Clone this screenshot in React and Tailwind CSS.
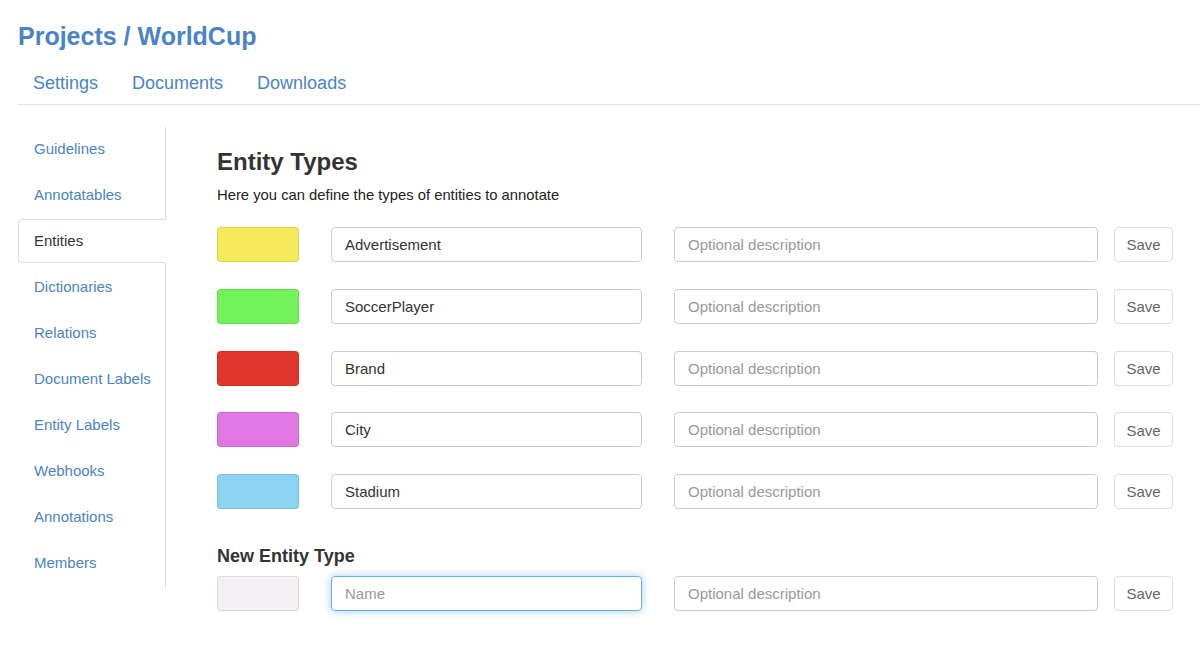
const linkColor = "text-[#4a84c4]";

const entities = [
  { name: "Advertisement", color: "bg-[#f4ea5a]" },
  { name: "SoccerPlayer", color: "bg-[#72f25a]" },
  { name: "Brand", color: "bg-[#e0362b]" },
  { name: "City", color: "bg-[#e177e3]" },
  { name: "Stadium", color: "bg-[#8dd3f3]" },
];

const sideItems = [
  "Guidelines",
  "Annotatables",
  "Entities",
  "Dictionaries",
  "Relations",
  "Document Labels",
  "Entity Labels",
  "Webhooks",
  "Annotations",
  "Members",
];

const EntityRow = ({ color, name, focus, className = "" }) => (
  <div className={`flex items-center h-[35px] ${className}`}>
    <div
      className={`w-[82px] h-[35px] rounded-[4px] border border-black/10 ${color}`}
    ></div>
    <input
      defaultValue={name}
      placeholder="Name"
      className={`ml-[32px] w-[311px] h-[35px] rounded-[4px] border px-[13px] text-[15px] text-[#333] placeholder:text-[#999] outline-none ${
        focus
          ? "border-[#66afe9] shadow-[0_0_8px_rgba(102,175,233,0.6)]"
          : "border-[#ccc]"
      }`}
    />
    <input
      placeholder="Optional description"
      className="ml-[32px] w-[424px] h-[35px] rounded-[4px] border border-[#ccc] px-[13px] text-[15px] text-[#333] placeholder:text-[#999] outline-none"
    />
    <button className="ml-[16px] w-[59px] h-[35px] pt-[2px] rounded-[4px] border border-[#ddd] bg-white text-[15px] text-[#666]">
      Save
    </button>
  </div>
);

export default function App() {
  return (
    <div className="w-[1200px] h-[647px] bg-white font-['Liberation_Sans',Arial,sans-serif] text-[#333] overflow-hidden">
      <h1 className={`pl-[18px] pt-[22px] text-[25px] leading-[28px] font-bold ${linkColor}`}>
        Projects / WorldCup
      </h1>

      <div className="ml-[18px] mt-[8px] flex border-b border-[#e5e5e5]">
        {["Settings", "Documents", "Downloads"].map((t) => (
          <a
            key={t}
            className={`px-[15px] pt-[12px] pb-[8px] mr-[4px] text-[18px] leading-[26px] ${linkColor}`}
          >
            {t}
          </a>
        ))}
      </div>

      <div className="flex">
        <div className="ml-[18px] mt-[22px] w-[148px] h-[461px] border-r border-[#ddd]">
          {sideItems.map((t) =>
            t === "Entities" ? (
              <div
                key={t}
                className="h-[44px] mb-[2px] -mr-[1px] flex items-center pl-[15px] text-[15px] text-[#333] bg-white border border-[#ddd] border-r-white rounded-l-[4px]"
              >
                {t}
              </div>
            ) : (
              <div
                key={t}
                className={`h-[44px] mb-[2px] flex items-center pl-[16px] text-[15px] ${linkColor}`}
              >
                {t}
              </div>
            )
          )}
        </div>

        <div className="ml-[51px] mt-[43px]">
          <h3 className="text-[24px] leading-[28px] font-bold text-[#333]">
            Entity Types
          </h3>
          <p className="mt-[9px] text-[14.8px] leading-[20px] text-[#222]">
            Here you can define the types of entities to annotate
          </p>
          <div className="mt-[22px]">
            {entities.map((e, i) => (
              <EntityRow
                key={e.name}
                name={e.name}
                color={e.color}
                className={i > 0 ? "mt-[26.75px]" : ""}
              />
            ))}
          </div>
          <h4 className="mt-[36px] text-[18px] leading-[22px] font-bold text-[#333]">
            New Entity Type
          </h4>
          <EntityRow color="bg-[#f4f0f4]" name="" focus className="mt-[9px]" />
        </div>
      </div>
    </div>
  );
}
